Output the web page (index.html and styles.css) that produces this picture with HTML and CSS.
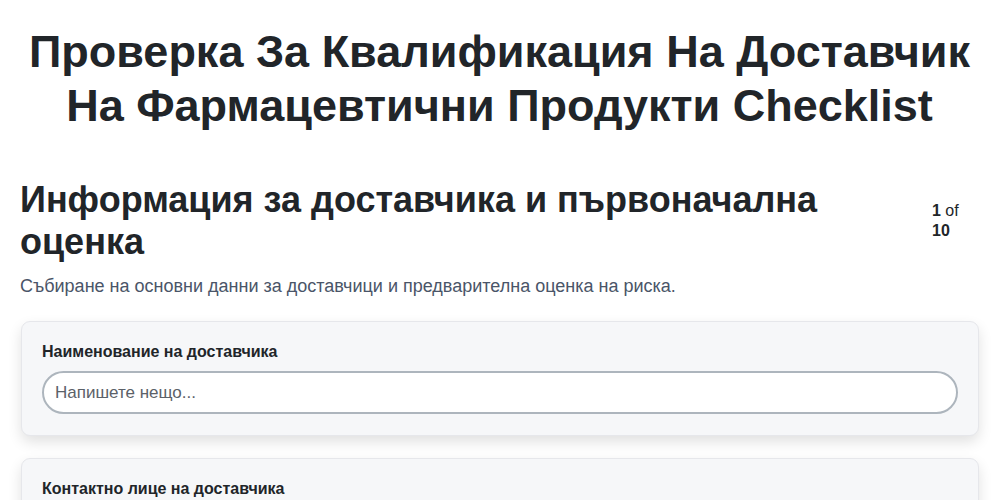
FILE: index.html
```html
<!DOCTYPE html>
<html lang="bg">
<head>
<meta charset="utf-8">
<title>Checklist</title>
<link rel="stylesheet" href="styles.css">
</head>
<body>
<main class="page">
  <h1 class="title">Проверка За Квалификация На Доставчик На Фармацевтични Продукти Checklist</h1>
  <section class="section">
    <div class="section-head">
      <h2 class="section-title">Информация за доставчика и първоначална оценка</h2>
      <div class="counter"><strong>1</strong> of <strong>10</strong></div>
    </div>
    <p class="section-desc">Събиране на основни данни за доставчици и предварителна оценка на риска.</p>
    <div class="card">
      <label class="field-label" for="f1">Наименование на доставчика</label>
      <input class="field-input" id="f1" type="text" placeholder="Напишете нещо...">
    </div>
    <div class="card">
      <label class="field-label" for="f2">Контактно лице на доставчика</label>
      <input class="field-input" id="f2" type="text" placeholder="Напишете нещо...">
    </div>
  </section>
</main>
</body>
</html>
```
FILE: styles.css
```css
* { box-sizing: border-box; }
html, body { margin: 0; padding: 0; background: #ffffff; }
body {
  font-family: "Liberation Sans", Arial, sans-serif;
  color: #212529;
}
.page {
  padding: 0 21px 0 20px;
}
.title {
  margin: 0;
  padding-top: 25px;
  font-size: 45px;
  line-height: 54px;
  font-weight: 700;
  text-align: center;
  color: #212529;
}
.section {
  margin-top: 46px;
}
.section-head {
  display: flex;
  align-items: flex-start;
  gap: 24px;
}
.section-title {
  flex: 1;
  margin: 0;
  font-size: 36px;
  line-height: 42px;
  font-weight: 700;
  color: #212529;
}
.counter {
  flex: 0 0 47px;
  padding: 22px 11px 0 0;
  font-size: 16px;
  line-height: 20px;
  color: #212529;
}
.section-desc {
  margin: 10px 0 21px;
  font-size: 18px;
  line-height: 27px;
  color: #4a5568;
}
.card {
  margin-left: 1px;
  background: #f6f7f9;
  border: 1px solid #e6e7eb;
  border-radius: 9px;
  box-shadow: 0 6px 14px rgba(0, 0, 0, 0.12);
  padding: 20px 20px 21px;
  margin-bottom: 22px;
}
.field-label {
  display: block;
  font-size: 16px;
  line-height: 20px;
  font-weight: 700;
  color: #212529;
  margin-bottom: 9px;
}
.field-input {
  display: block;
  width: 100%;
  height: 43px;
  padding: 0 11px;
  border: 2px solid #adb5bd;
  border-radius: 22px;
  background: #ffffff;
  font-family: "Liberation Sans", Arial, sans-serif;
  font-size: 17px;
  color: #212529;
}
.field-input::placeholder { color: #5b6168; opacity: 1; }
```
